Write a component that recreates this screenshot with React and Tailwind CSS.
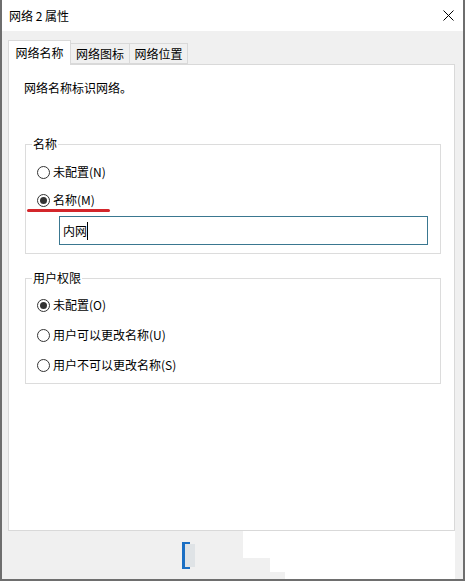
import React from "react";

const font = "font-['Noto_Sans_CJK_SC','Noto_Sans',sans-serif]";

function Radio({ checked, label }) {
  return (
    <div className="flex h-[20px] items-center gap-[3px] pl-[11px]">
      <span className="flex h-[13px] w-[13px] items-center justify-center rounded-full border border-[#333333] bg-white">
        {checked && <span className="h-[7px] w-[7px] rounded-full bg-[#333333]" />}
      </span>
      <span className="text-[12px] leading-[20px] text-black">{label}</span>
    </div>
  );
}

function Group({ title, children, className }) {
  return (
    <div className={"relative ml-[16px] w-[416px] border border-[#dcdcdc] " + className}>
      <span className="absolute left-[6px] top-[-10px] bg-white px-[1px] text-[12px] leading-[18px] text-black">
        {title}
      </span>
      {children}
    </div>
  );
}

export default function App() {
  return (
    <div className={"flex h-[581px] w-[465px] flex-col border-x-2 border-b-2 border-[#6e6e6e] bg-white " + font}>
      {/* title bar */}
      <div className="flex h-[31px] shrink-0 items-center justify-between bg-white pl-[7px] pr-[9px]">
        <span className="text-[12px] leading-[16px] text-black">网络 2 属性</span>
        <svg width="11" height="11" viewBox="0 0 11 11">
          <path d="M0.5 0.5 L10.5 10.5 M10.5 0.5 L0.5 10.5" stroke="#000" strokeWidth="1" fill="none" />
        </svg>
      </div>

      {/* body */}
      <div className="flex flex-1 flex-col bg-[#f0f0f0] pl-[6px] pr-[8px] pt-[9px]">
        {/* tabs */}
        <div className="flex h-[24px] items-end">
          <div className="relative z-10 mb-[-1px] flex h-[25px] w-[63px] items-center justify-center border border-b-0 border-[#d9d9d9] bg-white text-[12px] text-black">
            网络名称
          </div>
          <div className="flex h-[21px] w-[59px] items-center justify-center border-y border-r border-[#d9d9d9] bg-[#f0f0f0] text-[12px] text-black">
            网络图标
          </div>
          <div className="flex h-[21px] w-[58px] items-center justify-center border-y border-r border-[#d9d9d9] bg-[#f0f0f0] text-[12px] text-black">
            网络位置
          </div>
        </div>

        {/* panel */}
        <div className="flex h-[467px] w-[447px] flex-col border border-[#d9d9d9] bg-white">
          <div className="mt-[15px] pl-[15px] text-[12px] leading-[16px] text-black">网络名称标识网络。</div>

          <Group title="名称" className="mt-[48px] h-[110px] pt-[17px]">
            <Radio label="未配置(N)" />
            <div className="mt-[8px]">
              <Radio checked label="名称(M)" />
            </div>
            <div className="absolute left-[1px] top-[64px] h-[3px] w-[83px] rounded-full bg-[#d3262b]" />
            <div className="ml-[33px] mt-[6px] flex h-[29px] w-[369px] items-center border border-[#3a7790] bg-white pl-[3px]">
              <span className="text-[12px] leading-[18px] text-black">内网</span>
              <span className="h-[18px] w-[1px] bg-black" />
            </div>
          </Group>

          <Group title="用户权限" className="mt-[24px] flex h-[106px] flex-col gap-[10px] pt-[16px]">
            <Radio checked label="未配置(O)" />
            <Radio label="用户可以更改名称(U)" />
            <Radio label="用户不可以更改名称(S)" />
          </Group>
        </div>

        {/* bottom area */}
        <div className="relative flex-1">
          <div className="absolute left-[174px] top-[11px] h-[27px] w-[13px] bg-[#f0f0f0]">
            <div className="absolute left-[3px] top-[2px] h-[23px] w-[10px] bg-[#dfe3e6]" />
            <div className="absolute left-0 top-0 h-[27px] w-[3px] bg-[#1a6fc4]" />
            <div className="absolute left-0 top-0 h-[2px] w-[8px] bg-[#1a6fc4]" />
            <div className="absolute bottom-0 left-0 h-[2px] w-[8px] bg-[#1a6fc4]" />
          </div>
          <div className="absolute left-[235px] top-0 h-[27px] w-[212px] bg-white" />
          <div className="absolute left-[262px] top-[27px] h-[14px] w-[185px] bg-white" />
          <div className="absolute left-[277px] top-[41px] h-[7px] w-[170px] bg-white" />
        </div>
      </div>
    </div>
  );
}
